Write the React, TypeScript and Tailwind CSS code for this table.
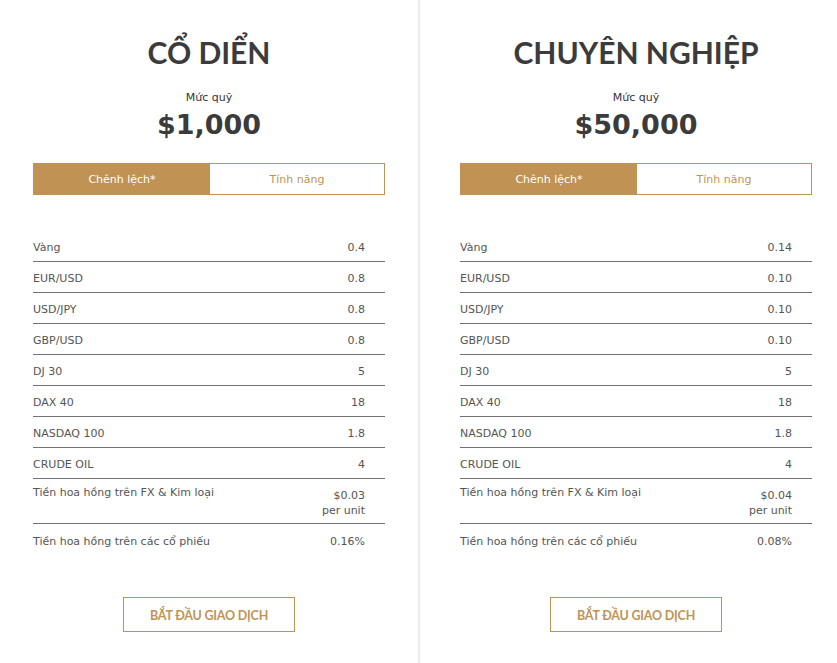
import React from 'react';

type Row = { label: string; value: string; sub?: string };

const plans: { name: string; amount: string; rows: Row[] }[] = [
  {
    name: 'CỔ DIỂN',
    amount: '$1,000',
    rows: [
      { label: 'Vàng', value: '0.4' },
      { label: 'EUR/USD', value: '0.8' },
      { label: 'USD/JPY', value: '0.8' },
      { label: 'GBP/USD', value: '0.8' },
      { label: 'DJ 30', value: '5' },
      { label: 'DAX 40', value: '18' },
      { label: 'NASDAQ 100', value: '1.8' },
      { label: 'CRUDE OIL', value: '4' },
      { label: 'Tiền hoa hồng trên FX & Kim loại', value: '$0.03', sub: 'per unit' },
      { label: 'Tiền hoa hồng trên các cổ phiếu', value: '0.16%' },
    ],
  },
  {
    name: 'CHUYÊN NGHIỆP',
    amount: '$50,000',
    rows: [
      { label: 'Vàng', value: '0.14' },
      { label: 'EUR/USD', value: '0.10' },
      { label: 'USD/JPY', value: '0.10' },
      { label: 'GBP/USD', value: '0.10' },
      { label: 'DJ 30', value: '5' },
      { label: 'DAX 40', value: '18' },
      { label: 'NASDAQ 100', value: '1.8' },
      { label: 'CRUDE OIL', value: '4' },
      { label: 'Tiền hoa hồng trên FX & Kim loại', value: '$0.04', sub: 'per unit' },
      { label: 'Tiền hoa hồng trên các cổ phiếu', value: '0.08%' },
    ],
  },
];

const PlanCard: React.FC<{ plan: (typeof plans)[number] }> = ({ plan }) => {
  return (
    <div className="w-[352px] flex flex-col">
      <h2 className="mt-[33px] text-center text-[30px] leading-[38px] font-bold text-[#3b3b3b] font-['Lato',sans-serif]">
        {plan.name}
      </h2>
      <div className="mt-[20px] text-center text-[11px] leading-[14px] text-[#333] font-['DejaVu_Sans',sans-serif]">
        Mức quỹ
      </div>
      <div className="mt-[4px] text-center text-[27px] leading-[32px] font-bold text-[#3b3b3b] font-['DejaVu_Sans',sans-serif]">
        {plan.amount}
      </div>

      {/* tabs */}
      <div className="mt-[22px] flex h-[32px] border border-[#c09354] font-['DejaVu_Sans',sans-serif] text-[11px]">
        <div className="w-[176px] bg-[#c09354] text-white flex items-center justify-center pt-[2px]">Chênh lệch*</div>
        <div className="flex-1 bg-white text-[#c09354] flex items-center justify-center pt-[2px]">Tính năng</div>
      </div>

      <div className="mt-[36px] flex flex-col font-['DejaVu_Sans',sans-serif] text-[11px] text-[#555]">
        {plan.rows.map((r, i) => {
          const last = i === plan.rows.length - 1;
          if (r.sub) {
            return (
              <div key={r.label} className="flex justify-between h-[45px] border-b border-[#737373]">
                <span className="pt-[6px] leading-[15px]">{r.label}</span>
                <span className="pt-[9px] pr-[20px] leading-[15px] text-right">
                  {r.value}
                  <br />
                  {r.sub}
                </span>
              </div>
            );
          }
          return (
            <div
              key={r.label}
              className={`flex justify-between items-center pt-[4px] ${last ? 'h-[33px]' : 'h-[31px] border-b border-[#737373]'}`}
            >
              <span>{r.label}</span>
              <span className="pr-[20px]">{r.value}</span>
            </div>
          );
        })}
      </div>

      <div className="mt-[40px] flex justify-center">
        <button className="w-[172px] h-[35px] pt-[3px] border border-[#c09354] text-[#c09354] text-[12.5px] font-bold font-['Lato',sans-serif] tracking-[-0.2px]">
          BẮT ĐẦU GIAO DỊCH
        </button>
      </div>
    </div>
  );
};

export default function App() {
  return (
    <div className="w-[837px] h-[663px] bg-white flex overflow-hidden">
      <div className="w-[418px] pl-[33px] shrink-0">
        <PlanCard plan={plans[0]} />
      </div>
      <div className="w-[2px] bg-[#ececec] shrink-0" />
      <div className="pl-[40px] shrink-0">
        <PlanCard plan={plans[1]} />
      </div>
    </div>
  );
}
